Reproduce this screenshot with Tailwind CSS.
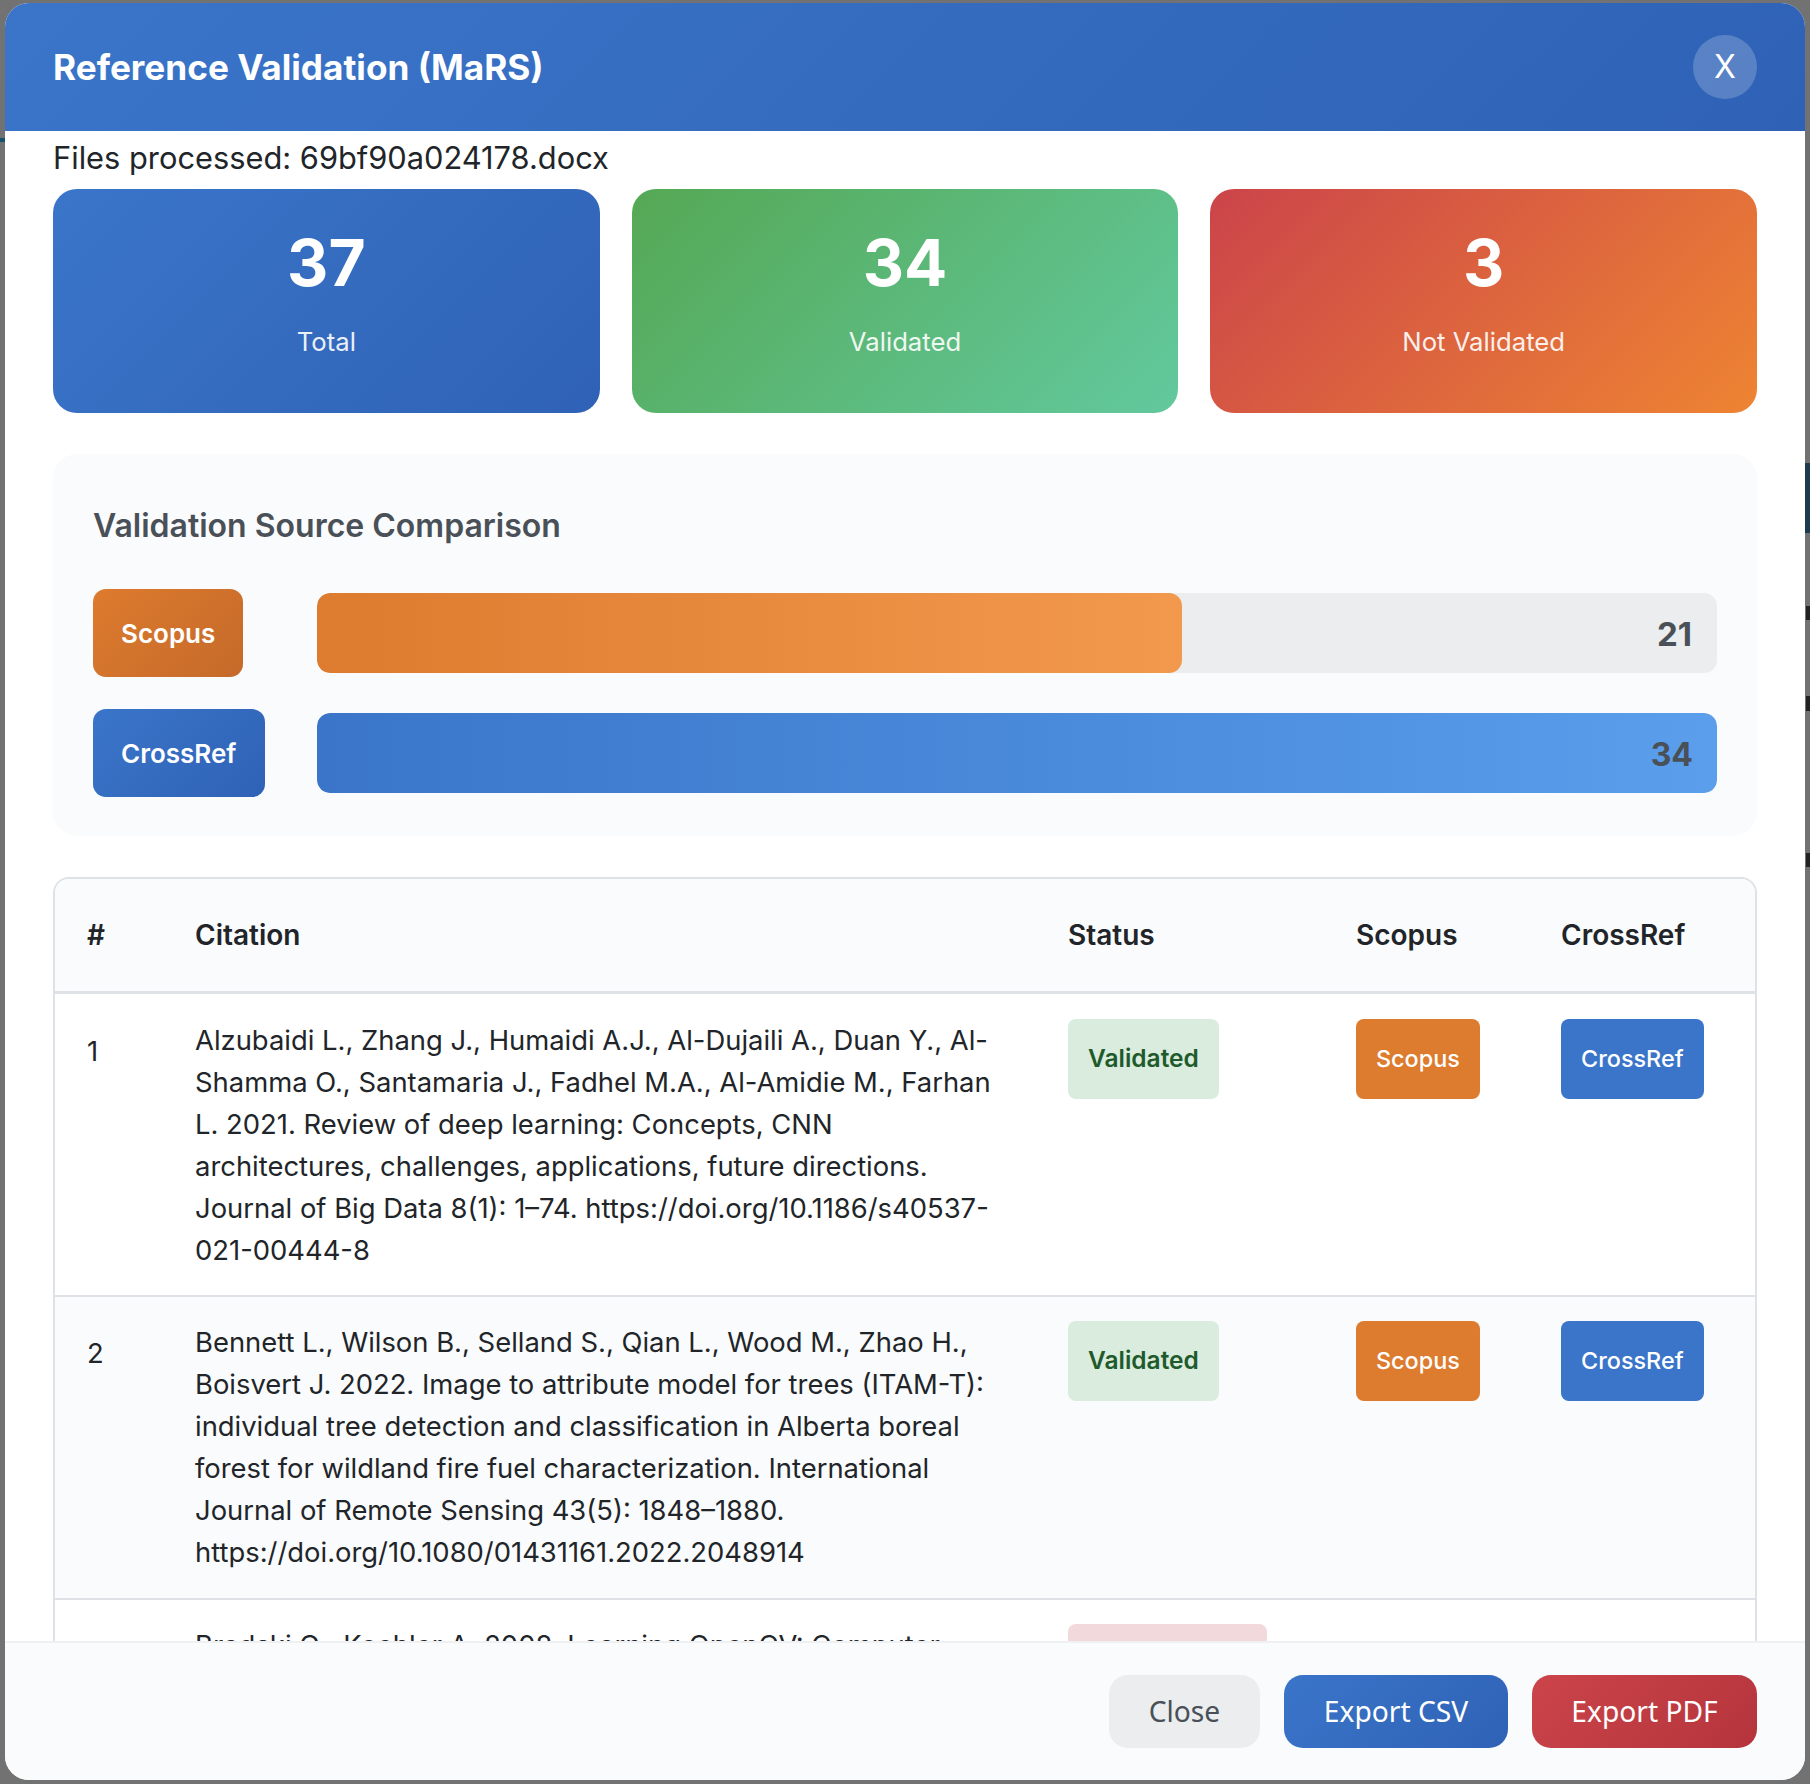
<!DOCTYPE html>
<html lang="en">
<head>
<meta charset="UTF-8">
<title>Reference Validation (MaRS)</title>
<script src="https://cdn.jsdelivr.net/npm/@tailwindcss/browser@4"></script>
</head>
<body class="relative w-[1810px] h-[1784px] overflow-hidden bg-[#727272] pt-[3px] pb-[4px] px-[5px] font-['Inter','Liberation_Sans',sans-serif]">
  <!-- bits of the page behind the overlay -->
  <div class="absolute left-0 top-[138px] w-[5px] h-[4px] bg-[#17506f]"></div>
  <div class="absolute right-0 top-[463px] w-[5px] h-[70px] bg-[#1e3a4f]"></div>
  <div class="absolute right-0 top-[606px] w-[4px] h-[14px] bg-[#222222]"></div>
  <div class="absolute right-0 top-[696px] w-[4px] h-[15px] bg-[#222222]"></div>
  <div class="absolute right-0 top-[853px] w-[4px] h-[14px] bg-[#222222]"></div>

  <div class="relative flex flex-col h-full w-full rounded-[24px] overflow-hidden bg-white">

    <!-- header -->
    <div class="flex items-center justify-between shrink-0 h-[128px] px-[48px] text-white bg-linear-[135deg] from-[#3a75c9] to-[#2f62b6]">
      <h1 class="text-[35.2px] font-bold">Reference Validation (MaRS)</h1>
      <button class="w-[64px] h-[64px] rounded-full bg-white/20 text-[32px] text-white flex items-center justify-center">X</button>
    </div>

    <!-- body -->
    <div class="flex-1 min-h-0 overflow-hidden px-[48px]">
      <p class="text-[30.8px] leading-[48px] h-[58px] text-[#212529] pt-[3px]">Files processed: 69bf90a024178.docx</p>

      <div class="grid grid-cols-3 gap-[32px] mb-[41px]">
        <div class="h-[224px] rounded-[24px] text-center text-white pt-[35px] bg-linear-[135deg] from-[#3a75c9] to-[#2f62b6]">
          <div class="text-[64px] font-bold leading-[78px]">37</div>
          <div class="text-[25.7px] mt-[21px] opacity-90">Total</div>
        </div>
        <div class="h-[224px] rounded-[24px] text-center text-white pt-[35px] bg-linear-[135deg] from-[#55a854] to-[#62c99e]">
          <div class="text-[64px] font-bold leading-[78px]">34</div>
          <div class="text-[25.7px] mt-[21px] opacity-90">Validated</div>
        </div>
        <div class="h-[224px] rounded-[24px] text-center text-white pt-[35px] bg-linear-[135deg] from-[#cb444a] to-[#ee8432]">
          <div class="text-[64px] font-bold leading-[78px]">3</div>
          <div class="text-[25.7px] mt-[21px] opacity-90">Not Validated</div>
        </div>
      </div>

      <!-- comparison -->
      <div class="h-[382px] rounded-[24px] bg-[#fafbfc] p-[40px] mb-[41px]">
        <h2 class="text-[32px] leading-[40px] font-semibold text-[#495057] mb-[43px] pt-[12px]">Validation Source Comparison</h2>
        <div class="flex flex-col gap-[32px]">
          <div class="flex items-center gap-[24px]">
            <div class="w-[200px] shrink-0">
              <span class="inline-flex items-center h-[88px] px-[28px] rounded-[13px] text-white text-[26px] font-semibold bg-linear-[135deg] from-[#dd7b2e] to-[#c56a2a]">Scopus</span>
            </div>
            <div class="relative flex-1 h-[80px] rounded-[13px] bg-[#ebedef] overflow-hidden">
              <div class="h-full rounded-[13px] bg-linear-to-r from-[#dd7b2e] to-[#f2994d]" style="width:61.76%"></div>
              <span class="absolute right-[25px] top-[calc(50%+2px)] -translate-y-1/2 text-[33px] font-bold text-[#495057]">21</span>
            </div>
          </div>
          <div class="flex items-center gap-[24px]">
            <div class="w-[200px] shrink-0">
              <span class="inline-flex items-center h-[88px] pl-[28px] pr-[29px] rounded-[13px] text-white text-[26px] font-semibold bg-linear-[135deg] from-[#3a75c9] to-[#2f62b6]">CrossRef</span>
            </div>
            <div class="relative flex-1 h-[80px] rounded-[13px] bg-[#ebedef] overflow-hidden">
              <div class="h-full rounded-[13px] bg-linear-to-r from-[#3a75c9] to-[#5a9eec]" style="width:100%"></div>
              <span class="absolute right-[24px] top-[calc(50%+2px)] -translate-y-1/2 text-[32px] font-bold text-[#495057]">34</span>
            </div>
          </div>
        </div>
      </div>

      <!-- results table -->
      <div class="rounded-t-[16px] border-2 border-[#dee2e6] border-b-0 overflow-hidden">
        <table class="w-full table-fixed border-collapse text-[27.4px] text-[#212529]">
          <colgroup>
            <col class="w-[140px]"><col class="w-[873px]"><col class="w-[288px]"><col class="w-[205px]"><col>
          </colgroup>
          <thead class="bg-[#fafbfc]">
            <tr class="h-[113px] border-b-[3px] border-[#dee2e6] text-left text-[28px]">
              <th class="pl-[32px] font-semibold">#</th>
              <th class="font-semibold">Citation</th>
              <th class="font-semibold">Status</th>
              <th class="font-semibold">Scopus</th>
              <th class="font-semibold">CrossRef</th>
            </tr>
          </thead>
          <tbody>
            <tr class="align-top border-b-2 border-[#dee2e6]">
              <td class="pl-[32px] pt-[37px]">1</td>
              <td class="pt-[25px] pb-[24px] leading-[42px] pr-[60px]">Alzubaidi L., Zhang J., Humaidi A.J., Al-Dujaili A., Duan Y., Al-Shamma O., Santamaria J., Fadhel M.A., Al-Amidie M., Farhan L. 2021. Review of deep learning: Concepts, CNN architectures, challenges, applications, future directions. Journal of Big Data 8(1): 1–74. https://doi.org/10.1186/s40537-021-00444-8</td>
              <td class="pt-[25px]"><span class="inline-flex items-center h-[80px] px-[20px] rounded-[8px] bg-[#d9ecdd] text-[#1f5a2c] text-[24.5px] font-semibold">Validated</span></td>
              <td class="pt-[25px]"><span class="inline-flex items-center h-[80px] px-[20px] rounded-[8px] bg-[#dd7b2e] text-white text-[23.4px] font-medium">Scopus</span></td>
              <td class="pt-[25px]"><span class="inline-flex items-center h-[80px] px-[20px] rounded-[8px] bg-[#3a75c9] text-white text-[23.4px] font-medium">CrossRef</span></td>
            </tr>
            <tr class="align-top border-b-2 border-[#dee2e6] bg-[#fafbfc]">
              <td class="pl-[32px] pt-[36px]">2</td>
              <td class="pt-[24px] pb-[25px] leading-[42px] pr-[60px]">Bennett L., Wilson B., Selland S., Qian L., Wood M., Zhao H., Boisvert J. 2022. Image to attribute model for trees (ITAM-T): individual tree detection and classification in Alberta boreal forest for wildland fire fuel characterization. International Journal of Remote Sensing 43(5): 1848–1880. https://doi.org/10.1080/01431161.2022.2048914</td>
              <td class="pt-[24px]"><span class="inline-flex items-center h-[80px] px-[20px] rounded-[8px] bg-[#d9ecdd] text-[#1f5a2c] text-[24.5px] font-semibold">Validated</span></td>
              <td class="pt-[24px]"><span class="inline-flex items-center h-[80px] px-[20px] rounded-[8px] bg-[#dd7b2e] text-white text-[23.4px] font-medium">Scopus</span></td>
              <td class="pt-[24px]"><span class="inline-flex items-center h-[80px] px-[20px] rounded-[8px] bg-[#3a75c9] text-white text-[23.4px] font-medium">CrossRef</span></td>
            </tr>
            <tr class="align-top">
              <td class="pl-[32px] pt-[35px]">3</td>
              <td class="pt-[24px] pb-[22px] leading-[42px] pr-[60px]">Bradski G., Koehler A. 2008. Learning OpenCV: Computer</td>
              <td class="pt-[24px]"><span class="inline-flex items-center h-[80px] px-[20px] rounded-[8px] bg-[#f2d9dc] text-[#842029] text-[24.5px] font-semibold">Not Validated</span></td>
              <td></td>
              <td></td>
            </tr>
          </tbody>
        </table>
      </div>
    </div>

    <!-- footer -->
    <div class="shrink-0 h-[139px] border-t-2 border-[#eef0f2] bg-[#fafbfc] flex items-start justify-end gap-[24px] pt-[32px] pr-[48px] font-['Noto_Sans','Open_Sans',sans-serif] text-[28.2px]">
      <button class="h-[73px] w-[151px] rounded-[19px] bg-[#ebedef] text-[#495057]">Close</button>
      <button class="h-[73px] w-[224px] rounded-[19px] text-white bg-linear-[135deg] from-[#3a75c9] to-[#2f62b6]">Export CSV</button>
      <button class="h-[73px] w-[225px] rounded-[19px] text-white bg-linear-[135deg] from-[#cb444a] to-[#b5343c]">Export PDF</button>
    </div>
  </div>
</body>
</html>
